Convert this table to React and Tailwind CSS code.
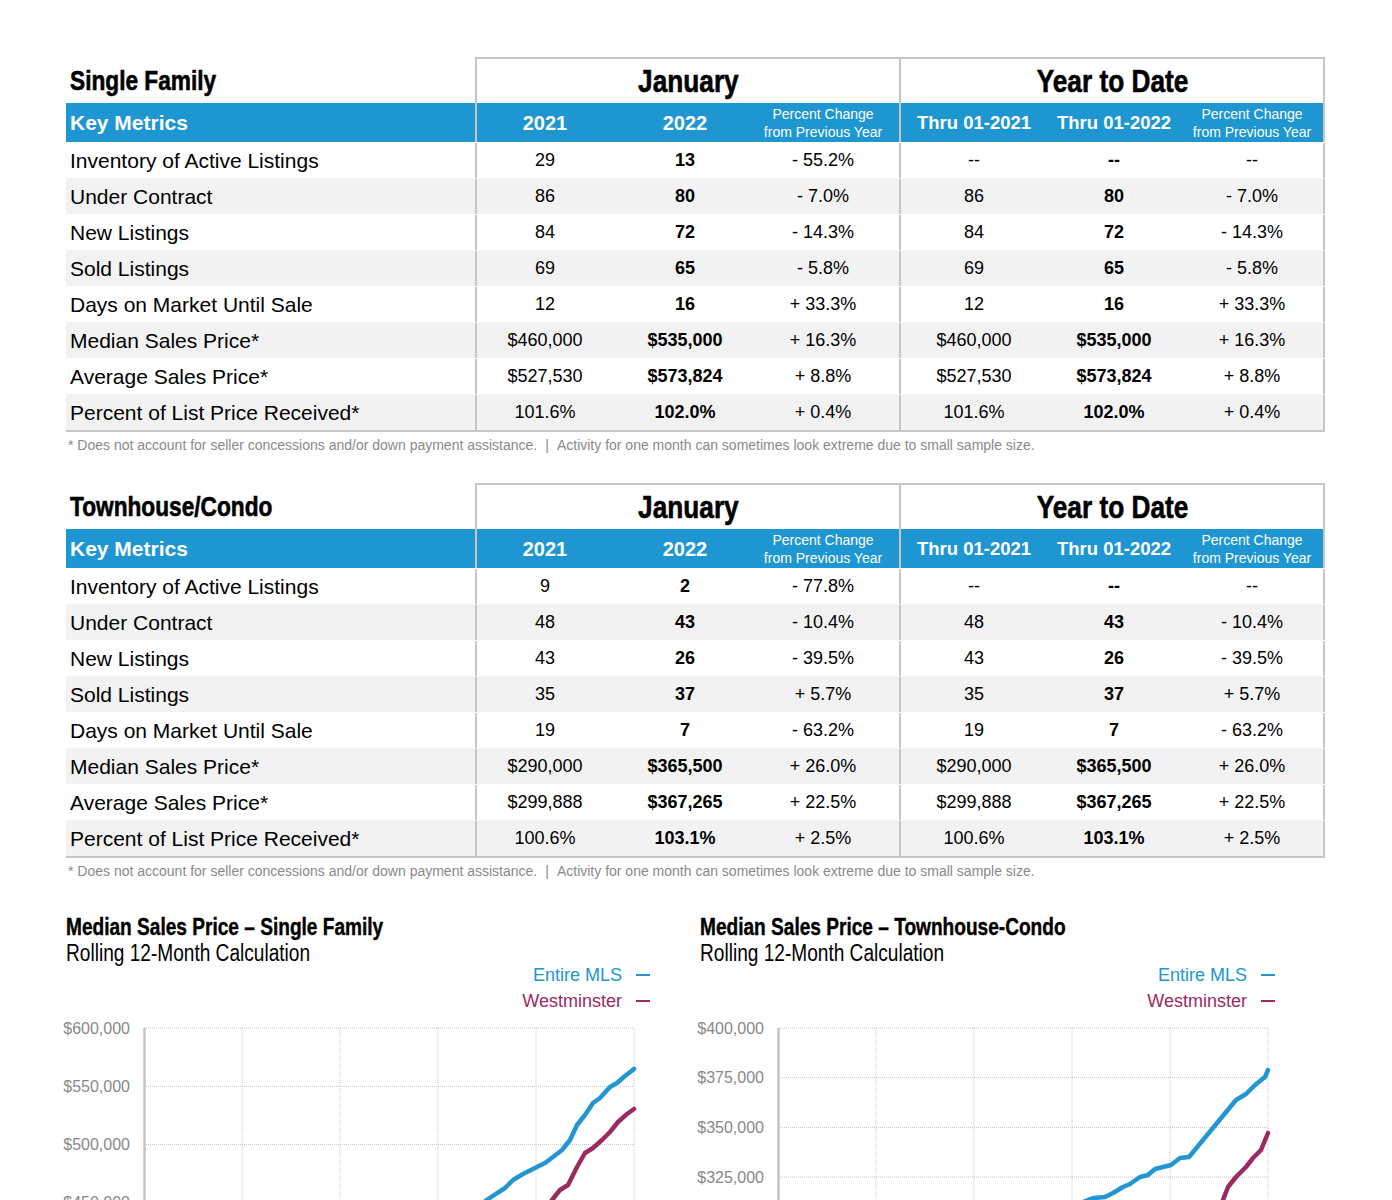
import React from "react";

const sf = [
  ["Inventory of Active Listings", "29", "13", "- 55.2%", "--", "--", "--"],
  ["Under Contract", "86", "80", "- 7.0%", "86", "80", "- 7.0%"],
  ["New Listings", "84", "72", "- 14.3%", "84", "72", "- 14.3%"],
  ["Sold Listings", "69", "65", "- 5.8%", "69", "65", "- 5.8%"],
  ["Days on Market Until Sale", "12", "16", "+ 33.3%", "12", "16", "+ 33.3%"],
  ["Median Sales Price*", "$460,000", "$535,000", "+ 16.3%", "$460,000", "$535,000", "+ 16.3%"],
  ["Average Sales Price*", "$527,530", "$573,824", "+ 8.8%", "$527,530", "$573,824", "+ 8.8%"],
  ["Percent of List Price Received*", "101.6%", "102.0%", "+ 0.4%", "101.6%", "102.0%", "+ 0.4%"],
];

const th = [
  ["Inventory of Active Listings", "9", "2", "- 77.8%", "--", "--", "--"],
  ["Under Contract", "48", "43", "- 10.4%", "48", "43", "- 10.4%"],
  ["New Listings", "43", "26", "- 39.5%", "43", "26", "- 39.5%"],
  ["Sold Listings", "35", "37", "+ 5.7%", "35", "37", "+ 5.7%"],
  ["Days on Market Until Sale", "19", "7", "- 63.2%", "19", "7", "- 63.2%"],
  ["Median Sales Price*", "$290,000", "$365,500", "+ 26.0%", "$290,000", "$365,500", "+ 26.0%"],
  ["Average Sales Price*", "$299,888", "$367,265", "+ 22.5%", "$299,888", "$367,265", "+ 22.5%"],
  ["Percent of List Price Received*", "100.6%", "103.1%", "+ 2.5%", "100.6%", "103.1%", "+ 2.5%"],
];

function PctHead({ shift }) {
  return (
    <div className={`text-[14px] leading-[18px] text-center ${shift ? "pr-[10px]" : ""}`}>
      <div>Percent Change</div>
      <div>from Previous Year</div>
    </div>
  );
}

function Table({ title, rows }) {
  return (
    <div className="w-[1259px]">
      <div className="flex h-[46px]">
        <div className="w-[409px] flex items-center pl-[4px] pt-[2px] text-[28px] font-bold">
          <span className="inline-block origin-left scale-x-[0.81] whitespace-nowrap [-webkit-text-stroke:0.6px_black]">{title}</span>
        </div>
        <div className="w-[424px] border-l-2 border-t-2 border-[#c6c6c6] flex items-center justify-center text-[32px] font-bold">
          <span className="inline-block origin-center scale-x-[0.82] whitespace-nowrap [-webkit-text-stroke:0.6px_black]">January</span>
        </div>
        <div className="w-[426px] border-l-2 border-t-2 border-r-2 border-[#c6c6c6] flex items-center justify-center text-[32px] font-bold">
          <span className="inline-block origin-center scale-x-[0.82] whitespace-nowrap [-webkit-text-stroke:0.6px_black]">Year to Date</span>
        </div>
      </div>
      <div className="flex h-[39px] bg-[#1e96d1] text-white">
        <div className="w-[409px] flex items-center pl-[4px] text-[21px] font-bold">Key Metrics</div>
        <div className="w-[424px] border-l-2 border-[#c6c6c6] grid grid-cols-[136px_144px_142px] items-center text-center">
          <div className="text-[20px] font-bold">2021</div>
          <div className="text-[20px] font-bold">2022</div>
          <PctHead shift />
        </div>
        <div className="w-[426px] border-l-2 border-r-2 border-[#c6c6c6] grid grid-cols-[146px_134px_142px] items-center text-center">
          <div className="text-[18.5px] font-bold whitespace-nowrap">Thru 01-2021</div>
          <div className="text-[18.5px] font-bold whitespace-nowrap">Thru 01-2022</div>
          <PctHead />
        </div>
      </div>
      <div className="border-b-2 border-[#c6c6c6]">
        {rows.map((r, i) => (
          <div key={i} className={`flex h-[36px] pt-[1px] ${i % 2 === 1 ? "bg-[#f2f2f2]" : "bg-white"}`}>
            <div className="w-[409px] flex items-center pl-[4px] text-[21px]">{r[0]}</div>
            <div className="w-[424px] border-l-2 border-[#c6c6c6] grid grid-cols-[136px_144px_142px] items-center text-center text-[18px]">
              <div>{r[1]}</div>
              <div className="font-bold">{r[2]}</div>
              <div className="pr-[10px]">{r[3]}</div>
            </div>
            <div className="w-[426px] border-l-2 border-r-2 border-[#c6c6c6] grid grid-cols-[146px_134px_142px] items-center text-center text-[18px]">
              <div>{r[4]}</div>
              <div className="font-bold">{r[5]}</div>
              <div>{r[6]}</div>
            </div>
          </div>
        ))}
      </div>
    </div>
  );
}

function Footnote() {
  return (
    <div className="mt-[5px] pl-[2px] text-[14px] leading-[16px] text-[#8a8a8a] whitespace-nowrap">
      * Does not account for seller concessions and/or down payment assistance.
      <span className="mx-[8px]">|</span>
      Activity for one month can sometimes look extreme due to small sample size.
    </div>
  );
}

const toPts = (arr) => arr.map((p) => p.join(",")).join(" ");

function Chart({ title, labels, step, blue, purple, width }) {
  const xL = 92;
  const xR = 582;
  const yT = 14;
  return (
    <div className="flex flex-col" style={{ width }}>
      <div className="text-[23px] leading-[26px] font-bold">
        <span className="inline-block origin-left scale-x-[0.83] whitespace-nowrap [-webkit-text-stroke:0.4px_black]">{title}</span>
      </div>
      <div className="text-[23px] leading-[26px]">
        <span className="inline-block origin-left scale-x-[0.83] whitespace-nowrap">Rolling 12-Month Calculation</span>
      </div>
      <div className="flex flex-col items-end -mt-[4px] text-[18px] leading-[26px]">
        <div className="flex items-center text-[#2196d3]">
          Entire MLS
          <span className="ml-[14px] w-[14px] h-[2px] bg-[#2196d3]" />
        </div>
        <div className="flex items-center text-[#9c2a5e]">
          Westminster
          <span className="ml-[14px] w-[14px] h-[2px] bg-[#9c2a5e]" />
        </div>
      </div>
      <svg className="-ml-[14px] block" width="600" height="186" viewBox="0 0 600 186">
        {labels.map((l, k) => {
          const y = yT + k * step;
          return (
            <g key={k}>
              <line x1={xL} x2={xR} y1={y} y2={y} stroke="#c4c4c4" strokeWidth="1" strokeDasharray="1 1" />
              <text x="78" y={y + 5.5} textAnchor="end" fontSize="16" fill="#888888" fontFamily="Liberation Sans, Arial, sans-serif">
                {l}
              </text>
            </g>
          );
        })}
        {[1, 2, 3, 4, 5].map((k) => (
          <line key={k} x1={xL + k * 98} x2={xL + k * 98} y1={yT} y2={200} stroke="#c4c4c4" strokeWidth="1" strokeDasharray="1 1" />
        ))}
        <line x1={xL + 0.5} x2={xL + 0.5} y1={yT} y2={200} stroke="#c4c4c4" strokeWidth="2.5" />
        <polyline points={toPts(purple)} fill="none" stroke="#9c2a5e" strokeWidth="4.5" strokeLinejoin="round" strokeLinecap="round" />
        <polyline points={toPts(blue)} fill="none" stroke="#2196d3" strokeWidth="4.5" strokeLinejoin="round" strokeLinecap="round" />
      </svg>
    </div>
  );
}

const blue1 = [
  [428, 192], [434.7, 186], [444.7, 179.3], [453, 174], [461, 166], [471, 160], [485, 153], [493, 149],
  [501, 143], [510, 136], [518, 126], [525, 111], [533, 101], [541, 89], [548, 84], [558, 73],
  [565, 69], [573, 62], [582, 55],
];
const purple1 = [
  [496, 192], [500, 186], [508, 176], [516, 171], [525, 153], [533, 139], [541, 134], [550, 126],
  [558, 118], [566, 108], [575, 100], [582, 95],
];
const blue2 = [
  [397, 188], [402, 186], [408, 184], [419, 183], [427, 179], [437, 173], [444, 170], [454, 163],
  [462, 161], [469, 155], [485, 151], [494, 144], [503, 143], [550, 86], [560, 80], [569, 71],
  [579, 63], [582, 56],
];
const purple2 = [
  [535, 192], [537, 186], [542, 173], [550, 163], [560, 153], [567, 144], [575, 136], [582, 119],
];

export default function App() {
  return (
    <div className="w-[1392px] h-[1200px] overflow-hidden bg-white pl-[66px] pt-[57px] font-['Liberation_Sans',Arial,sans-serif] text-black">
      <Table title="Single Family" rows={sf} />
      <Footnote />
      <div className="mt-[30px]">
        <Table title="Townhouse/Condo" rows={th} />
      </div>
      <Footnote />
      <div className="flex gap-[50px] mt-[35px]">
        <Chart
          title="Median Sales Price – Single Family"
          labels={["$600,000", "$550,000", "$500,000", "$450,000"]}
          step={58.33}
          blue={blue1}
          purple={purple1}
          width={584}
        />
        <Chart
          title="Median Sales Price – Townhouse-Condo"
          labels={["$400,000", "$375,000", "$350,000", "$325,000", "$300,000"]}
          step={49.7}
          blue={blue2}
          purple={purple2}
          width={575}
        />
      </div>
    </div>
  );
}
